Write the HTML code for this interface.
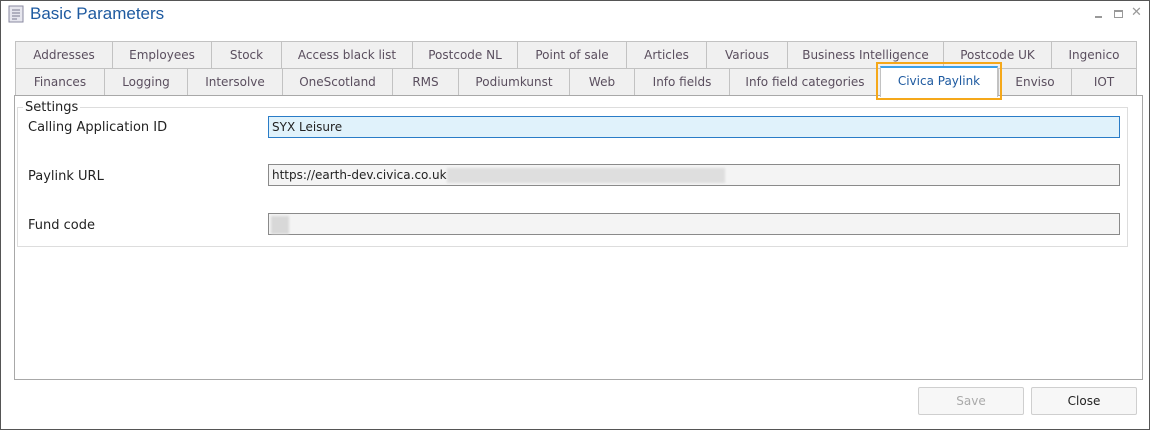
<!DOCTYPE html>
<html><head><style>
*{box-sizing:border-box;margin:0;padding:0}
body{width:1150px;height:430px;background:#fff;font-family:"DejaVu Sans","Liberation Sans",sans-serif;font-size:12px;position:relative;overflow:hidden}
.win{position:absolute;left:0;top:0;width:1150px;height:430px;border:1px solid #555}
.t{position:absolute;background:#f0f0f0;border:1px solid #c2c2c2;color:#5a4e5e;text-align:center;line-height:26px;height:28px;white-space:nowrap;font-size:12px}
.abs{position:absolute}
.inp{position:absolute;left:268px;width:852px;height:22px;border:1px solid #8a8a8a;background:#f4f4f4;font-size:12px;line-height:20px;padding-left:3px;color:#222}
.lbl{position:absolute;left:28px;font-size:13px;color:#222}
.btn{position:absolute;top:387px;height:28px;border:1px solid #cfcfcf;border-radius:2px;background:#f7f7f7;text-align:center;line-height:27px;font-size:12px}
</style></head><body>
<div class="win"></div>
<svg class="abs" style="left:8px;top:5px" width="16" height="18"><rect x="1" y="1" width="14" height="16" fill="#e6e6ee" stroke="#8a8aa0"/><g stroke="#7a7a90"><line x1="4" y1="5" x2="12" y2="5"/><line x1="4" y1="8" x2="12" y2="8"/><line x1="4" y1="11" x2="12" y2="11"/><line x1="4" y1="14" x2="9" y2="14"/></g></svg>
<div class="abs" style="left:30px;top:4px;font-size:17px;color:#1e5aa0;font-family:'Liberation Sans',sans-serif">Basic Parameters</div>
<div class="abs" style="left:1095px;top:16px;width:7px;height:2px;background:#999"></div>
<div class="abs" style="left:1114px;top:10px;width:9px;height:8px;border:1px solid #999;border-top-width:2px"></div>
<div class="abs" style="left:1131px;top:5px;color:#999;font-size:13px">✕</div>

<div class="t" style="left:15px;top:41px;width:98px">Addresses</div>
<div class="t" style="left:112px;top:41px;width:100px">Employees</div>
<div class="t" style="left:211px;top:41px;width:71px">Stock</div>
<div class="t" style="left:281px;top:41px;width:132px">Access black list</div>
<div class="t" style="left:412px;top:41px;width:106px">Postcode NL</div>
<div class="t" style="left:517px;top:41px;width:110px">Point of sale</div>
<div class="t" style="left:626px;top:41px;width:81px">Articles</div>
<div class="t" style="left:706px;top:41px;width:82px">Various</div>
<div class="t" style="left:787px;top:41px;width:157px">Business Intelligence</div>
<div class="t" style="left:943px;top:41px;width:109px">Postcode UK</div>
<div class="t" style="left:1051px;top:41px;width:86px">Ingenico</div>

<div class="t" style="left:15px;top:68px;width:90px">Finances</div>
<div class="t" style="left:104px;top:68px;width:84px">Logging</div>
<div class="t" style="left:187px;top:68px;width:96px">Intersolve</div>
<div class="t" style="left:282px;top:68px;width:111px">OneScotland</div>
<div class="t" style="left:392px;top:68px;width:67px">RMS</div>
<div class="t" style="left:458px;top:68px;width:112px">Podiumkunst</div>
<div class="t" style="left:569px;top:68px;width:66px">Web</div>
<div class="t" style="left:634px;top:68px;width:96px">Info fields</div>
<div class="t" style="left:729px;top:68px;width:152px">Info field categories</div>
<div class="t" style="left:998px;top:68px;width:74px">Enviso</div>
<div class="t" style="left:1071px;top:68px;width:66px">IOT</div>

<div class="abs" style="left:14px;top:95px;width:1129px;height:285px;border:1px solid #a8a8a8;background:#fff"></div>
<div class="abs" style="left:880px;top:66px;width:118px;height:31px;background:#fff;border-top:2px solid #3aa0e8;border-left:1px solid #c2c2c2;border-right:1px solid #c2c2c2;color:#1e5aa0;text-align:center;line-height:27px">Civica Paylink</div>
<div class="abs" style="left:876px;top:62px;width:126px;height:38px;border:2px solid #f5a81a"></div>

<div class="abs" style="left:17px;top:107px;width:1111px;height:140px;border:1px solid #ddd"></div>
<div class="abs" style="left:23px;top:100px;background:#fff;padding:0 2px;font-size:13px;color:#222">Settings</div>
<div class="lbl" style="top:120px">Calling Application ID</div>
<div class="lbl" style="top:169px">Paylink URL</div>
<div class="lbl" style="top:218px">Fund code</div>
<div class="inp" style="top:116px;background:#e0f2fb;border-color:#2a7cc7">SYX Leisure</div>
<div class="inp" style="top:164px">https://earth-dev.civica.co.uk<span style="display:inline-block;vertical-align:middle;width:278px;height:15px;background:#dedede;filter:blur(1px)"></span></div>
<div class="inp" style="top:213px"><span style="display:inline-block;vertical-align:middle;width:18px;height:18px;background:#d8d8d8;filter:blur(1px);margin-left:-1px"></span></div>

<div class="btn" style="left:918px;width:106px;color:#aaa">Save</div>
<div class="btn" style="left:1031px;width:106px;color:#222">Close</div>
</body></html>
